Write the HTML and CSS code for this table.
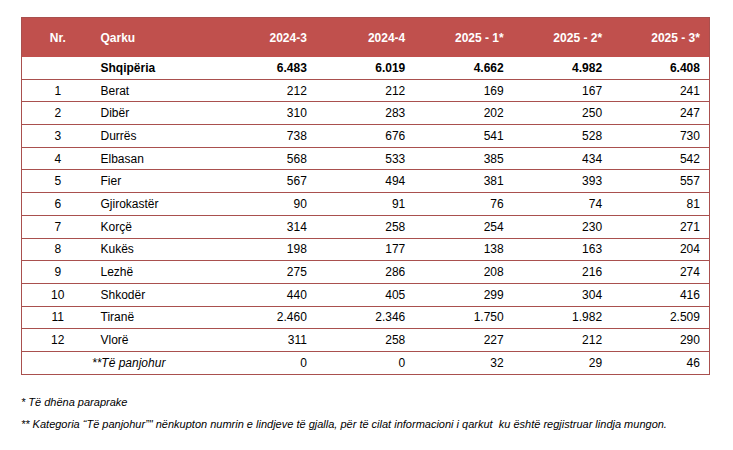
FILE: index.html
```html
<!DOCTYPE html>
<html lang="sq">
<head>
<meta charset="utf-8">
<title>Lindjet sipas qarqeve</title>
<link rel="stylesheet" href="styles.css">
</head>
<body>
<table class="data">
  <colgroup>
    <col class="c-nr"><col class="c-name"><col class="c-val"><col class="c-val"><col class="c-val"><col class="c-val"><col class="c-val">
  </colgroup>
  <thead>
    <tr class="head">
      <th class="nr">Nr.</th><th class="name">Qarku</th><th>2024-3</th><th>2024-4</th><th>2025 - 1*</th><th>2025 - 2*</th><th>2025 - 3*</th>
    </tr>
  </thead>
  <tbody>
    <tr class="total"><td class="nr"></td><td class="name">Shqipëria</td><td>6.483</td><td>6.019</td><td>4.662</td><td>4.982</td><td>6.408</td></tr>
    <tr><td class="nr">1</td><td class="name">Berat</td><td>212</td><td>212</td><td>169</td><td>167</td><td>241</td></tr>
    <tr><td class="nr">2</td><td class="name">Dibër</td><td>310</td><td>283</td><td>202</td><td>250</td><td>247</td></tr>
    <tr><td class="nr">3</td><td class="name">Durrës</td><td>738</td><td>676</td><td>541</td><td>528</td><td>730</td></tr>
    <tr><td class="nr">4</td><td class="name">Elbasan</td><td>568</td><td>533</td><td>385</td><td>434</td><td>542</td></tr>
    <tr><td class="nr">5</td><td class="name">Fier</td><td>567</td><td>494</td><td>381</td><td>393</td><td>557</td></tr>
    <tr><td class="nr">6</td><td class="name">Gjirokastër</td><td>90</td><td>91</td><td>76</td><td>74</td><td>81</td></tr>
    <tr><td class="nr">7</td><td class="name">Korçë</td><td>314</td><td>258</td><td>254</td><td>230</td><td>271</td></tr>
    <tr><td class="nr">8</td><td class="name">Kukës</td><td>198</td><td>177</td><td>138</td><td>163</td><td>204</td></tr>
    <tr><td class="nr">9</td><td class="name">Lezhë</td><td>275</td><td>286</td><td>208</td><td>216</td><td>274</td></tr>
    <tr><td class="nr">10</td><td class="name">Shkodër</td><td>440</td><td>405</td><td>299</td><td>304</td><td>416</td></tr>
    <tr><td class="nr">11</td><td class="name">Tiranë</td><td>2.460</td><td>2.346</td><td>1.750</td><td>1.982</td><td>2.509</td></tr>
    <tr><td class="nr">12</td><td class="name">Vlorë</td><td>311</td><td>258</td><td>227</td><td>212</td><td>290</td></tr>
    <tr><td class="unknown" colspan="2">**Të panjohur</td><td>0</td><td>0</td><td>32</td><td>29</td><td>46</td></tr>
  </tbody>
</table>
<p class="note note-first">* Të dhëna paraprake</p>
<p class="note">** Kategoria “Të panjohur”" nënkupton numrin e lindjeve të gjalla, për të cilat informacioni i qarkut&nbsp; ku është regjistruar lindja mungon.</p>
</body>
</html>
```
FILE: styles.css
```css
html, body {
  margin: 0;
  padding: 0;
  background: #ffffff;
}
body {
  padding: 17px 0 0 21px;
  font-family: "Liberation Sans", Arial, sans-serif;
  color: #000000;
}
.data {
  border-collapse: collapse;
  table-layout: fixed;
  width: 688px;
  font-size: 12px;
  border: 1px solid #a9504e;
}
.c-nr { width: 72px; }
.c-name { width: 124px; }
.c-val { width: 98.4px; }
.data th, .data td {
  padding: 0 9px 0 0;
  text-align: right;
  white-space: nowrap;
  line-height: 14px;
}
.data td {
  height: 21.7px;
  border-bottom: 1px solid #a9504e;
}
.head th {
  background: #c0504d;
  color: #ffffff;
  font-weight: bold;
  height: 39px;
}
.data .nr {
  text-align: center;
  padding: 0;
}
.data .name {
  text-align: left;
  padding-left: 7px;
}
.total td {
  font-weight: bold;
}
.data .unknown {
  text-align: left;
  padding-left: 70px;
  font-style: italic;
}
.note {
  margin: 0;
  font-size: 11px;
  font-style: italic;
  line-height: 14px;
  height: 22px;
}
.note-first {
  margin-top: 20px;
}
```
